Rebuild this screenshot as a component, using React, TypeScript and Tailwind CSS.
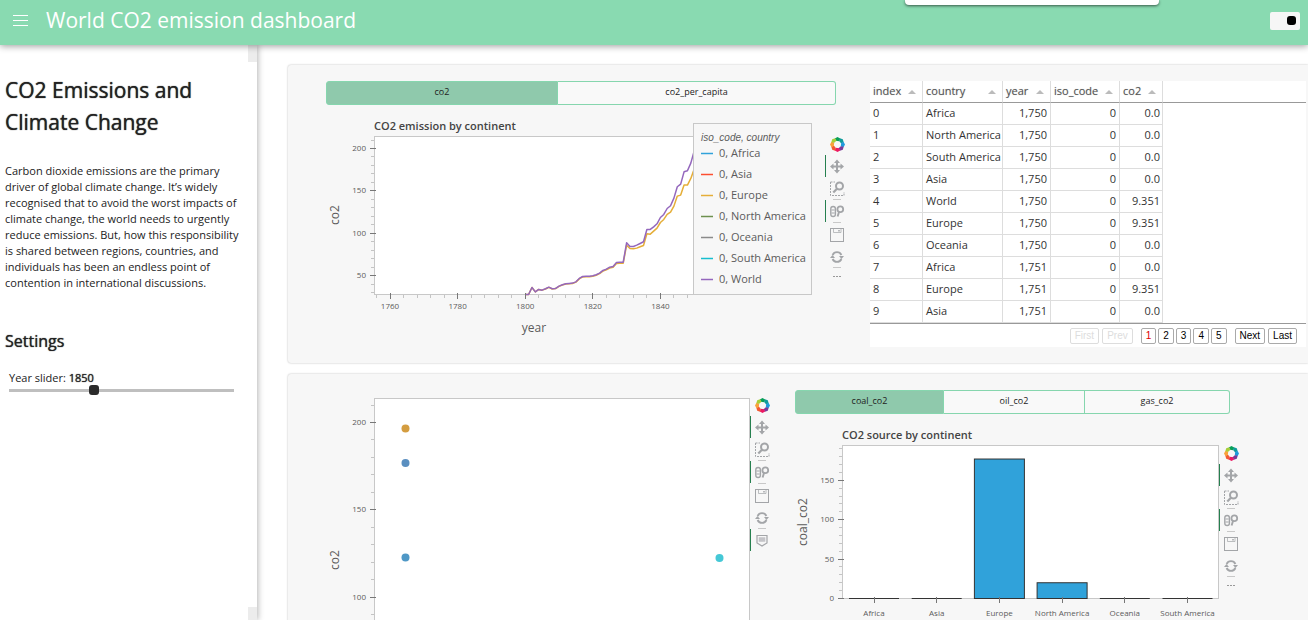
import React, { useState } from "react";

type Point = [number, number];

const WORLD = [
  28, 28, 36.2, 31.1, 33.9, 33.1, 34.7, 36.6, 34.7, 35.1, 37.8, 39.4, 40.6, 41, 41.4, 42.9, 46.9, 49.2, 49.4, 49.6, 50,
  51.2, 53.1, 56.3, 57.9, 60.2, 61, 65.7, 66.1, 66.1, 88.9, 84.6, 84.6, 86.1, 88.1, 90.1, 104.6, 104.6, 107.7, 111.3,
  118.7, 122.3, 129.3, 132.5, 141.5, 154.9, 158, 172.5, 173.7, 182.8, 197,
];

const EUROPE = [
  28, 28, 36.2, 31.1, 33.9, 33.1, 34.5, 36.4, 34.5, 34.9, 37.5, 39.1, 40.3, 40.7, 41, 42.5, 46.4, 48.7, 48.9, 49, 49.4,
  50.6, 52.5, 55.5, 57.1, 59.2, 60, 64.6, 64.9, 64.9, 86.1, 82.2, 81.8, 82.6, 84.2, 85.7, 99.5, 99.1, 102.6, 106.2,
  112.8, 116.4, 122.3, 125, 132.1, 143.9, 145.1, 156.9, 156.9, 164.7, 175.7,
];

const LEGEND = [
  { name: "0, Africa", color: "#30a2da" },
  { name: "0, Asia", color: "#fc4f30" },
  { name: "0, Europe", color: "#e5ae38" },
  { name: "0, North America", color: "#6d904f" },
  { name: "0, Oceania", color: "#8b8b8b" },
  { name: "0, South America", color: "#17becf" },
  { name: "0, World", color: "#9467bd" },
];

const ROWS: [string, string, string][] = [
  ["Africa", "1,750", "0.0"],
  ["North America", "1,750", "0.0"],
  ["South America", "1,750", "0.0"],
  ["Asia", "1,750", "0.0"],
  ["World", "1,750", "9.351"],
  ["Europe", "1,750", "9.351"],
  ["Oceania", "1,750", "0.0"],
  ["Africa", "1,751", "0.0"],
  ["Europe", "1,751", "9.351"],
  ["Asia", "1,751", "0.0"],
];

const SOURCES: [string, number][] = [
  ["Africa", 0],
  ["Asia", 0],
  ["Europe", 177],
  ["North America", 20],
  ["Oceania", 0],
  ["South America", 0],
];

function range(from: number, to: number, step: number) {
  const out: number[] = [];
  for (let v = from; v <= to; v += step) out.push(v);
  return out;
}

function YAxis({ x, scale, major, minor }: { x: number; scale: (v: number) => number; major: number[]; minor: number[] }) {
  return (
    <g>
      {minor.map((v) => (
        <line key={v} x1={x - 3} x2={x} y1={Math.floor(scale(v)) + 0.5} y2={Math.floor(scale(v)) + 0.5} stroke="#c4c4c4" />
      ))}
      {major.map((v) => (
        <g key={v}>
          <line x1={x - 4} x2={x + 2} y1={Math.floor(scale(v)) + 0.5} y2={Math.floor(scale(v)) + 0.5} stroke="#777" />
          <text x={x - 8} y={Math.floor(scale(v)) + 3} textAnchor="end" className="fill-[#5b5b5b] text-[8px]">
            {v}
          </text>
        </g>
      ))}
    </g>
  );
}

function AxisLabel({ x, y, children }: { x: number; y: number; children: string }) {
  return (
    <text transform={`translate(${x} ${y}) rotate(-90)`} textAnchor="middle" className="fill-[#5b5b5b] text-[12px]">
      {children}
    </text>
  );
}

function LineChart() {
  const sx = (year: number) => 64 + (year - 1760) * 3.38;
  const sy = (v: number) => 35.5 + (200 - v) * 0.8487;
  const path = (data: number[]) => data.map((v, i): Point => [sx(1800 + i), sy(v)]).map((p) => p.join(",")).join(" ");
  return (
    <svg width="499" height="232" className="shrink-0" role="img" aria-label="CO2 emission by continent">
      <text x="48" y="17" className="fill-[#444] text-[11px] font-semibold">
        CO2 emission by continent
      </text>
      <rect x="48.5" y="23.5" width="437" height="158" fill="#fff" stroke="#c8c8c8" />
      <polyline points={path(EUROPE)} fill="none" stroke="#e5ae38" strokeWidth="1.5" strokeLinejoin="round" />
      <polyline points={path(WORLD)} fill="none" stroke="#9467bd" strokeWidth="1.5" strokeLinejoin="round" />
      <YAxis x={48} scale={sy} major={[50, 100, 150, 200]} minor={range(30, 210, 10)} />
      {range(1756, 1848, 4).map((v) => (
        <line key={v} x1={Math.floor(sx(v)) + 0.5} x2={Math.floor(sx(v)) + 0.5} y1="182" y2="185" stroke="#c4c4c4" />
      ))}
      {range(1760, 1840, 20).map((v) => (
        <g key={v}>
          <line x1={Math.floor(sx(v)) + 0.5} x2={Math.floor(sx(v)) + 0.5} y1="180" y2="186" stroke="#777" />
          <text x={sx(v)} y="196" textAnchor="middle" className="fill-[#5b5b5b] text-[8px]">
            {v}
          </text>
        </g>
      ))}
      <text x="208" y="219" textAnchor="middle" className="fill-[#5b5b5b] text-[12px]">
        year
      </text>
      <AxisLabel x={13} y={102}>co2</AxisLabel>
      <rect x="367.5" y="10.5" width="118" height="171" fill="#f7f7f7" stroke="#c8c8c8" />
      <text x="375" y="28" className="fill-[#5b5b5b] font-['Liberation_Sans',sans-serif] text-[10px] italic">
        iso_code, country
      </text>
      {LEGEND.map((item, i) => (
        <g key={item.name}>
          <line x1="375" x2="387" y1={40.5 + i * 21} y2={40.5 + i * 21} stroke={item.color} strokeWidth="1.5" />
          <text x="393" y={44 + i * 21} className="fill-[#5b5b5b] text-[11px]">
            {item.name}
          </text>
        </g>
      ))}
    </svg>
  );
}

function ScatterChart() {
  const sy = (v: number) => 32.5 + (200 - v) * 1.746;
  const dots = [
    { x: 79.5, y: 38.5, color: "#d49d40" },
    { x: 79.5, y: 73, color: "#5a8fc0" },
    { x: 79.5, y: 167.5, color: "#4f98c6" },
    { x: 393.5, y: 168, color: "#45c8d6" },
  ];
  return (
    <svg width="424" height="350" className="shrink-0" role="img" aria-label="co2 scatter plot">
      <rect x="48.5" y="8.5" width="375" height="316" fill="#fff" stroke="#c8c8c8" />
      <YAxis x={48} scale={sy} major={[50, 100, 150, 200]} minor={range(40, 210, 10)} />
      <AxisLabel x={13} y={170}>co2</AxisLabel>
      {dots.map((d) => (
        <circle key={`${d.x}-${d.y}`} cx={d.x} cy={d.y} r="4" fill={d.color} />
      ))}
    </svg>
  );
}

function BarChart() {
  const sy = (v: number) => 176.5 - v * 0.788;
  return (
    <svg width="424" height="220" className="shrink-0" role="img" aria-label="CO2 source by continent">
      <text x="47" y="17" className="fill-[#444] text-[11px] font-semibold">
        CO2 source by continent
      </text>
      <rect x="47.5" y="23.5" width="376" height="153" fill="#fff" stroke="#c8c8c8" />
      <YAxis x={47} scale={sy} major={[0, 50, 100, 150]} minor={range(10, 190, 10)} />
      {SOURCES.map(([name, v], i) => {
        const mid = 79 + i * 62.7;
        return (
          <g key={name}>
            <rect x={mid - 25} y={sy(v)} width="50" height={v * 0.788} fill="#30a2da" stroke="#333" />
            {v === 0 && <line x1={mid - 25} x2={mid + 25} y1="176.5" y2="176.5" stroke="#333" />}
            <line x1={Math.floor(mid) + 0.5} x2={Math.floor(mid) + 0.5} y1="175" y2="181" stroke="#777" />
            <text x={mid} y="194" textAnchor="middle" className="fill-[#5b5b5b] text-[8px]">
              {name}
            </text>
          </g>
        );
      })}
      <AxisLabel x={12} y={100}>coal_co2</AxisLabel>
    </svg>
  );
}

const LOGO_COLORS = ["#0a9f5a", "#109b9b", "#1f9bdc", "#7a3a98", "#ec1a64", "#f15a33", "#f9a13a", "#a6ce39"];

function BokehLogo() {
  const at = (deg: number, r: number) => {
    const a = ((deg - 90) * Math.PI) / 180;
    return `${(7.5 + r * Math.cos(a)).toFixed(2)},${(7.5 + r * Math.sin(a)).toFixed(2)}`;
  };
  return (
    <svg width="15" height="15" viewBox="0 0 15 15" aria-hidden="true">
      {LOGO_COLORS.map((c, i) => {
        const t = i * 45;
        return (
          <polygon
            key={c}
            fill={c}
            points={[at(t - 24, 6.6), at(t, 7.5), at(t + 24, 6.6), at(t + 30, 3.8), at(t, 3.5), at(t - 18, 3.8)].join(" ")}
          />
        );
      })}
    </svg>
  );
}

const ICONS = {
  pan: (
    <g>
      <path d="M7 2.500v10M2 7.500h10" stroke="currentColor" strokeWidth="2" />
      <path d="M7 .5l3 3.500H4zM7 14.500l3-3.500H4zM0 7.500l3.500-3v6zM14 7.500l-3.500-3v6z" fill="currentColor" />
    </g>
  ),
  box: (
    <g fill="none" stroke="currentColor">
      <path d="M.5 1v13.500h13.500v-3.500M.5 1h4.500" strokeDasharray="2 1" />
      <circle cx="9.500" cy="5" r="3.500" strokeWidth="2" />
      <path d="M7.200 7.500L3.300 11.500" strokeWidth="2.200" />
    </g>
  ),
  wheel: (
    <g fill="none" stroke="currentColor">
      <rect x=".8" y="2.500" width="4.600" height="10" rx="2.300" strokeWidth="1.400" />
      <path d="M1.500 6h3.200M1.500 9h3.200" />
      <circle cx="10.300" cy="5.300" r="2.900" strokeWidth="1.800" />
      <path d="M9 8L7.600 12.500" strokeWidth="1.900" />
    </g>
  ),
  save: (
    <g fill="none" stroke="currentColor">
      <rect x=".5" y="1.500" width="13" height="13" />
      <path d="M3.500 1.500v4h7.500v-4" strokeOpacity=".7" />
      <path d="M9 3v1.500" strokeWidth="1.500" />
    </g>
  ),
  reset: (
    <g>
      <path d="M2.600 6A4.800 4.800 0 0 1 11.400 6M11.400 10A4.800 4.800 0 0 1 2.600 10" fill="none" stroke="currentColor" strokeWidth="1.900" />
      <path d="M9 7h5l-2.500 3zM0 9h5L2.500 6z" fill="currentColor" />
    </g>
  ),
  hover: (
    <g>
      <path d="M2 2.500h10v7.500l-5 3-5-3z" fill="none" stroke="currentColor" strokeWidth="1.200" />
      <path d="M3.700 4.200h6.600v4.600h-6.600z" fill="#c4c4c8" />
    </g>
  ),
};

function Tool({ icon, label, active }: { icon: keyof typeof ICONS; label: string; active?: boolean }) {
  return (
    <button
      type="button"
      aria-label={label}
      className={`flex h-[22px] w-6 items-center justify-center border-l text-[#a3a5a8] ${active ? "border-[#26804f]" : "border-transparent"}`}
    >
      <svg width="15" height="15" viewBox="0 0 15 15" aria-hidden="true">
        {ICONS[icon]}
      </svg>
    </button>
  );
}

function Divider() {
  return <div className="mx-auto h-px w-2 bg-[#c8c8c8]" />;
}

function Toolbar({ hover, className }: { hover?: boolean; className: string }) {
  return (
    <div className={`flex w-6 shrink-0 flex-col ${className}`} role="toolbar" aria-label="Plot tools">
      <div className="flex h-[22px] items-center justify-center">
        <BokehLogo />
      </div>
      <Tool icon="pan" label="Pan" active />
      <Tool icon="box" label="Box zoom" />
      <Divider />
      <Tool icon="wheel" label="Wheel zoom" active />
      <Divider />
      <Tool icon="save" label="Save" />
      <Tool icon="reset" label="Reset" />
      <Divider />
      {hover ? (
        <Tool icon="hover" label="Hover" active />
      ) : (
        <button type="button" aria-label="More tools" className="flex h-4 items-center justify-center">
          <svg width="9" height="1" aria-hidden="true">
            <path d="M0 .5h9" stroke="#999" strokeDasharray="2 1" />
          </svg>
        </button>
      )}
    </div>
  );
}

function Tabs({ items, className }: { items: { name: string; size: string }[]; className: string }) {
  const [selected, setSelected] = useState(0);
  return (
    <div className={`flex h-6 ${className}`} role="group">
      {items.map((item, i) => (
        <button
          key={item.name}
          type="button"
          aria-pressed={selected === i}
          onClick={() => setSelected(i)}
          className={`border-y border-r border-[#86d6ae] pb-0.5 text-[9px] text-[#222] first:rounded-l-[3px] first:border-l last:rounded-r-[3px] ${item.size} ${
            selected === i ? "bg-[#8fc9ac]" : "bg-[#f9f9f9]"
          }`}
        >
          {item.name}
        </button>
      ))}
    </div>
  );
}

const HEADS = [
  { name: "index", width: "w-[53px]" },
  { name: "country", width: "w-[80px]" },
  { name: "year", width: "w-[48px]" },
  { name: "iso_code", width: "w-[69px]" },
  { name: "co2", width: "w-[43px]" },
];

const CELL = "h-[22px] border-r border-b border-[#ddd] pt-0 pb-0.5 leading-4";

function DataTable() {
  const pager =
    "h-4 rounded-[2px] border border-[#aaa] bg-white px-1 font-['Liberation_Sans',sans-serif] text-[10px] leading-3 disabled:border-[#ddd] disabled:text-[#ddd]";
  return (
    <div className="mr-0.5 min-w-0 flex-1 self-start bg-white text-[11px] text-[#333]">
      <table className="w-full table-fixed border-separate border-spacing-0">
        <thead>
          <tr>
            {HEADS.map((h) => (
              <th key={h.name} className={`h-[22px] border-r border-b border-r-[#ddd] border-b-[#999] p-0 text-left font-medium text-[#555] ${h.width}`}>
                <div className="flex items-center justify-between pr-1.5 pl-[3px] [text-shadow:0_0_1px_#bbb]">
                  {h.name}
                  <svg width="8" height="4" className="shrink-0" aria-hidden="true">
                    <path d="M0 4l4-4 4 4z" fill="#bbb" />
                  </svg>
                </div>
              </th>
            ))}
            <td className="border-b border-[#999] p-0" />
          </tr>
        </thead>
        <tbody>
          {ROWS.map(([country, year, co2], i) => (
            <tr key={i}>
              <td className={`${CELL} pl-[3px]`}>{i}</td>
              <td className={`${CELL} pl-[3px]`}>{country}</td>
              <td className={`${CELL} pr-[3px] text-right`}>{year}</td>
              <td className={`${CELL} pr-[3px] text-right`}>0</td>
              <td className={`${CELL} pr-0.5 text-right`}>{co2}</td>
              <td className="p-0" />
            </tr>
          ))}
        </tbody>
      </table>
      <div className="flex h-6 items-center justify-end gap-[3px] border-t border-[#999] pr-[9px] text-black">
        <button type="button" disabled className={pager}>First</button>
        <button type="button" disabled className={pager}>Prev</button>
        <div className="flex gap-0.5 px-[5px]">
          {[1, 2, 3, 4, 5].map((n) => (
            <button key={n} type="button" className={`${pager} ${n === 1 ? "text-[#d00]" : ""}`}>
              {n}
            </button>
          ))}
        </div>
        <button type="button" className={pager}>Next</button>
        <button type="button" className={pager}>Last</button>
      </div>
    </div>
  );
}

const CARD = "flex rounded-l-[3px] bg-[#f7f7f7] pt-4 pb-4 pl-[38px] shadow-[0_0_2px_rgba(0,0,0,0.3)]";

export default function App() {
  const [year, setYear] = useState(1850);
  return (
    <div className="flex h-screen flex-col overflow-hidden bg-white font-['Open_Sans',sans-serif] text-[#222]">
      <header className="relative z-20 flex h-[45px] shrink-0 items-center bg-[#89dab1] pr-2 pb-1 pl-[13px] shadow-[0_1px_7px_rgba(0,0,0,0.4)]">
        <button type="button" aria-label="Toggle sidebar" className="mr-[18px] flex w-[15px] flex-col gap-1">
          <span className="h-px bg-white" />
          <span className="h-px bg-white" />
          <span className="h-px bg-white" />
        </button>
        <h1 className="text-[21px] text-white">World CO2 emission dashboard</h1>
        <input
          type="checkbox"
          role="switch"
          aria-label="Toggle theme"
          defaultChecked
          className="ml-auto flex h-[18px] w-[30px] appearance-none items-center rounded-[2px] bg-[#f6f6f6] px-1 before:size-[9px] before:rounded-[3px] before:bg-black checked:justify-end"
        />
        <div className="absolute top-0 right-[149px] h-[5px] w-[254px] rounded-b-[4px] bg-white shadow-[0_1px_3px_rgba(0,0,0,0.6)]" />
      </header>

      <div className="flex min-h-0 flex-1">
        <aside className="relative z-10 flex w-[257px] shrink-0 shadow-[1px_0_6px_rgba(0,0,0,0.3)]">
          <div className="flex-1 bg-white pt-[29px] pl-[5px]">
            <h2 className="text-[21px] leading-8 font-medium [text-shadow:0_0_1px_#222]">
              CO2 Emissions and
              <br />
              Climate Change
            </h2>
            <p className="mt-[25px] text-[11px] leading-4">
              Carbon dioxide emissions are the primary
              <br />
              driver of global climate change. It’s widely
              <br />
              recognised that to avoid the worst impacts of
              <br />
              climate change, the world needs to urgently
              <br />
              reduce emissions. But, how this responsibility
              <br />
              is shared between regions, countries, and
              <br />
              individuals has been an endless point of
              <br />
              contention in international discussions.
            </p>
            <h3 className="mt-[38px] text-[16px] leading-6 font-medium [text-shadow:0_0_1px_#222]">Settings</h3>
            <div className="mt-[17px] mr-[14px] ml-1 flex flex-col">
              <label htmlFor="year" className="text-[11px] leading-4">
                Year slider: <span className="font-medium [text-shadow:0_0_1px_#222]">{year}</span>
              </label>
              <input
                id="year"
                type="range"
                min={1750}
                max={2020}
                value={year}
                onChange={(e) => setYear(Number(e.target.value))}
                className="h-2 w-full appearance-none bg-transparent [&::-webkit-slider-runnable-track]:h-[3px] [&::-webkit-slider-runnable-track]:bg-[#bfbfbf] [&::-webkit-slider-thumb]:-mt-1 [&::-webkit-slider-thumb]:size-[10px] [&::-webkit-slider-thumb]:appearance-none [&::-webkit-slider-thumb]:rounded-[3px] [&::-webkit-slider-thumb]:bg-[#2b2b2b]"
              />
            </div>
          </div>
          <div className="flex w-[9px] flex-col justify-between bg-white">
            <div className="h-[17px] bg-[#ececec]" />
            <div className="h-[13px] bg-[#ececec]" />
          </div>
        </aside>

        <main className="min-w-0 flex-1 overflow-auto pt-5 pl-[31px] [scrollbar-width:none]">
          <section className={CARD}>
            <div className="mr-[21px] shrink-0">
              <Tabs
                className="w-[510px]"
                items={[
                  { name: "co2", size: "w-[232px]" },
                  { name: "co2_per_capita", size: "flex-1" },
                ]}
              />
              <div className="mt-2 flex">
                <LineChart />
                <Toolbar className="pt-5" />
              </div>
            </div>
            <DataTable />
          </section>

          <section className={`${CARD} mt-[11px]`}>
            <div className="mr-[21px] flex shrink-0">
              <ScatterChart />
              <Toolbar hover className="pt-1" />
            </div>
            <div>
              <Tabs
                className="w-[435px]"
                items={[
                  { name: "coal_co2", size: "w-[149px]" },
                  { name: "oil_co2", size: "w-[141px]" },
                  { name: "gas_co2", size: "flex-1" },
                ]}
              />
              <div className="mt-2 flex">
                <BarChart />
                <Toolbar className="pt-5" />
              </div>
            </div>
          </section>
        </main>
      </div>
    </div>
  );
}
